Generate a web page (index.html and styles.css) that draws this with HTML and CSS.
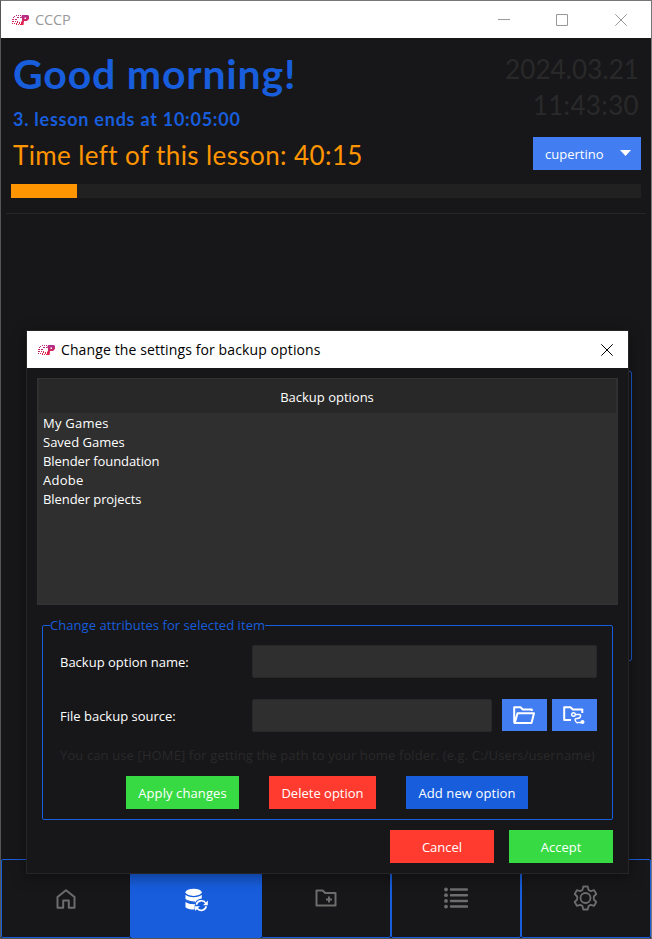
FILE: index.html
```html
<!DOCTYPE html>
<html lang="en">
<head>
<meta charset="utf-8">
<title>CCCP</title>
<link rel="stylesheet" href="styles.css">
</head>
<body>
<svg class="defs" aria-hidden="true">
  <defs>
    <linearGradient id="brand" x1="0" y1="0" x2="0" y2="1">
      <stop offset="0" stop-color="#b03090"/>
      <stop offset="1" stop-color="#ee1c3c"/>
    </linearGradient>
    <symbol id="logo" viewBox="0 0 17 10">
      <g fill="none" stroke="#b8287c" stroke-width="1" stroke-dasharray="1 1" shape-rendering="crispEdges">
        <path d="M4 .5h5M2 1.500h2M1 2.500h2M1 4v3"/>
        <path stroke-dasharray="2 1" d="M5 2.500h4M3 4.500h3"/>
        <path stroke="#d8284e" d="M.5 3.500v5M3 6.500h3M2 8.500h3M4 9.500h5M7 8.500h2M5 7.500h3"/>
      </g>
      <path fill="url(#brand)" fill-rule="evenodd" d="M10 0h6l1 1v3l-2 2h-3l-.5 4H9V7l1-1V3H9zM12.500 2.500V4H14V2.500z"/>
    </symbol>
  </defs>
</svg>
<div class="window">
  <header class="titlebar">
    <svg class="logo"><use href="#logo"/></svg>
    <span class="app-name">CCCP</span>
    <div class="controls">
      <svg viewBox="0 0 12 12"><path d="M0 5.500h12"/></svg>
      <svg viewBox="0 0 12 12"><path d="M.5 .5h11v11H.5z"/></svg>
      <svg viewBox="0 0 12 12"><path d="M.3 .3l11.400 11.400M11.700 .3L.3 11.700"/></svg>
    </div>
  </header>
  <section class="status">
    <div class="lesson">
      <h1>Good morning!</h1>
      <p class="ends">3. lesson ends at 10:05:00</p>
      <p class="left">Time left of this lesson: 40:15</p>
    </div>
    <div class="side">
      <p class="date">2024.03.21</p>
      <p class="time">11:43:30</p>
      <button class="theme"><span>cupertino</span><i class="arrow"></i></button>
    </div>
  </section>
  <div class="progress"><div class="bar"></div></div>
  <main class="page"><div class="panel"></div></main>
  <nav class="tabs">
    <div class="tab"><svg viewBox="0 0 20 20"><path d="M1.500 8L10 1.200 18.500 8v10.800h-5.700v-7.300H7.200v7.300H1.500z"/></svg></div>
    <div class="tab active"><svg class="db" viewBox="0 0 24 24">
      <g class="solid"><ellipse cx="9" cy="4" rx="8.500" ry="3.700"/><path d="M.5 6.500Q3 9 9 9t8.500-2.500v4Q12.500 11 11 14.300 3 14.500 .5 12zM.5 14Q4 16.500 10.300 16.300L10 22Q3 22 .5 19.500zM.5 12Q4 14.800 10.500 14.500v-1Q4 13.500 .5 11z"/></g>
      <path class="lines" d="M.5 12.800Q4 15.300 10.500 15.200"/>
      <path class="sync" d="M11.800 17a5.500 5.500 0 0 1 9.700-2M22.200 18.500a5.500 5.500 0 0 1-9.700 2.200"/>
      <path class="solid" d="M23.800 12.500v5h-5zM10.500 23.500v-5h5z"/></svg></div>
    <div class="tab"><svg class="folder" viewBox="0 0 22 18"><path d="M1.500 1.500h6.200l2.500 2.500h10.300v12.500h-19zM14 7.500v6M11 10.500h6"/></svg></div>
    <div class="tab"><svg class="list" viewBox="0 0 24 22"><path d="M7 2.500h16M7 8.200h16M7 13.900h16M7 19.600h16"/><g class="dots"><circle cx="2" cy="2.500" r="1.900"/><circle cx="2" cy="8.200" r="1.900"/><circle cx="2" cy="13.900" r="1.900"/><circle cx="2" cy="19.600" r="1.900"/></g></svg></div>
    <div class="tab"><svg class="gear" viewBox="0 0 24 26"><path d="M9.800 1.500h4.400l.8 3.400 2.300 1.300 3.300-1 2.200 3.800-2.500 2.500v3l2.500 2.500-2.200 3.800-3.300-1-2.300 1.300-.8 3.400H9.800L9 21.100l-2.300-1.300-3.300 1L1.200 17l2.500-2.500v-3L1.200 9l2.200-3.800 3.300 1L9 4.900z"/><circle cx="12" cy="13" r="5"/></svg></div>
  </nav>

  <div class="dialog" role="dialog">
    <header class="dialog-title">
      <svg class="logo"><use href="#logo"/></svg>
      <span>Change the settings for backup options</span>
      <svg class="close" viewBox="0 0 12 12"><path d="M.3 .3l11.400 11.400M11.700 .3L.3 11.700"/></svg>
    </header>
    <div class="dialog-body">
      <div class="options">
        <div class="options-head">Backup options</div>
        <ul>
          <li class="wide">My Games</li>
          <li>Saved Games</li>
          <li class="tight">Blender foundation</li>
          <li class="wide">Adobe</li>
          <li class="tight">Blender projects</li>
        </ul>
      </div>
      <fieldset>
        <legend>Change attributes for selected item</legend>
        <div class="row">
          <label>Backup option name:</label>
          <input type="text">
        </div>
        <div class="row">
          <label>File backup source:</label>
          <input type="text">
          <button class="pick"><svg viewBox="0 0 22 18"><path d="M4 17.200H1.800L1.200 16V1.200h6.300l2.300 2.300h9V5M4.500 7.200H21L18.500 17H1.800z"/></svg></button>
          <button class="pick"><svg viewBox="0 0 22 18"><path d="M8 14H1.200V1.200h6.300l2.300 2.300h9.500V7"/><g class="thin"><circle cx="10.500" cy="8.500" r="1.800"/><path d="M12.300 8.500H16q2 0 1.500 2t-3.500 2-1.500 2.500 3 1.500h3"/></g><circle class="fill" cx="19.500" cy="16" r="2"/></svg></button>
        </div>
        <p class="hint">You can use [HOME] for getting the path to your home folder. (e.g. C:/Users/username)</p>
        <div class="actions">
          <button class="btn green apply">Apply changes</button>
          <button class="btn red delete">Delete option</button>
          <button class="btn blue add">Add new option</button>
        </div>
      </fieldset>
      <div class="footer">
        <button class="btn red">Cancel</button>
        <button class="btn green">Accept</button>
      </div>
    </div>
  </div>
</div>
</body>
</html>
```
FILE: styles.css
```css
* { box-sizing: border-box; }
body { margin: 0; background: #171719; color: #fff; font: 13px/19px "Open Sans", "Noto Sans", sans-serif; }
h1, p, ul { margin: 0; padding: 0; font-weight: normal; }
button { border: 0; padding: 0; color: inherit; font: inherit; white-space: nowrap; }
svg { display: block; fill: none; flex: none; }
.defs { position: absolute; width: 0; height: 0; }
.window { position: relative; width: 652px; height: 939px; display: flex; flex-direction: column; border: 1px solid #555; border-top-color: #777; border-right-color: #777; overflow: hidden; }
.logo { width: 17px; height: 10px; }
.titlebar { height: 37px; flex: none; display: flex; align-items: center; background: #fff; color: #999; padding: 0 24px 0 11px; }
.app-name { margin-left: 6px; font-size: 14.5px; letter-spacing: -.1px; }
.controls { margin-left: auto; display: flex; gap: 47px; }
.controls svg { width: 12px; height: 12px; stroke: #999; }
.controls svg:first-child { margin-right: -1px; }

.status { height: 146px; flex: none; display: flex; justify-content: space-between; padding: 0 10px 0 12px; font-family: Lato, sans-serif; white-space: nowrap; }
h1 { margin-top: 12px; font-size: 41px; line-height: 48px; font-weight: bold; letter-spacing: .8px; color: #175ddc; }
.ends { margin-top: 9px; font-size: 18px; line-height: 24px; font-weight: bold; letter-spacing: .75px; color: #175ddc; }
.left { margin-top: 8px; font-size: 26px; line-height: 32px; letter-spacing: .4px; color: #ff9500; }
.side { display: flex; flex-direction: column; align-items: flex-end; color: #29292a; font-size: 26px; line-height: 36px; }
.date { margin: 13px 2px 0 0; letter-spacing: .1px; }
.time { margin-right: 2px; letter-spacing: .35px; }
.theme { margin-top: 14px; width: 108px; height: 33px; display: flex; justify-content: space-between; align-items: center; padding: 0 10px 0 12px; background: #427df2; color: #fff; font: 13px "Open Sans", sans-serif; }
.arrow { width: 11px; height: 6px; margin-top: -1px; background: #fff; clip-path: polygon(0 0, 100% 0, 50% 100%); }
.progress { height: 14px; flex: none; margin: 0 10px; background: #212121; }
.bar { width: 66px; height: 14px; background: #ff9500; }
.page { flex: 1; margin: 15px 5px 0; border-top: 1px solid #272729; padding: 157px 14px 0 20px; }
.panel { height: 290px; border: 1px solid #1c58c8; border-radius: 2px; }
.tabs { height: 79px; flex: none; display: flex; }
.tab { flex: 1; display: flex; align-items: center; justify-content: center; border: 1px solid #175ddc; border-radius: 2px; stroke: #6d6d6d; }
.tab svg { width: 20px; height: 20px; margin-right: 1px; stroke-width: 2; stroke-linejoin: round; }
.tab.active { background: #175ddc; border-radius: 0; }
.tab .db { width: 23px; height: 24px; stroke: none; margin: 2px 0 0 1px; }
.solid { fill: #fff; }
.lines { stroke: #175ddc; stroke-width: 1.2; }
.sync { stroke: #fff; stroke-width: 1.7; }
.tab .folder { width: 22px; height: 18px; margin-bottom: 1px; }
.tab .list { width: 24px; height: 22px; margin: 0 0 1px; stroke-width: 2.5; stroke-linecap: round; }
.dots { fill: #6d6d6d; stroke: none; }
.tab .gear { width: 25px; height: 26px; margin-bottom: 1px; stroke-width: 1.8; }

.dialog { position: absolute; left: 25px; top: 329px; width: 603px; height: 544px; display: flex; flex-direction: column; background: #171719; border: 1px solid #252527; box-shadow: 0 3px 14px rgba(0, 0, 0, .4); }
.dialog-title { height: 37px; flex: none; display: flex; align-items: center; background: #fff; color: #000; padding: 0 15px 0 11px; }
.dialog-title span { margin-left: 6px; font-size: 14px; letter-spacing: .11px; white-space: nowrap; }
.close { width: 12px; height: 12px; margin-left: auto; stroke: #000; }
.dialog-body { flex: 1; display: flex; flex-direction: column; padding: 10px; }
.options { height: 227px; flex: none; background: #2f2f2f; border: 1px solid #323232; }
.options-head { height: 34px; margin: 0 1px; padding: 9px 1px 0 0; text-align: center; background: #282828; }
.options ul { list-style: none; padding: 1px 0 0 5px; }
.wide { letter-spacing: .25px; }
.tight { letter-spacing: -.08px; }
fieldset { margin: 11px 5px 0; height: 204px; flex: none; border: 1px solid #175ddc; border-radius: 2px; padding: 10px 15px 0 17px; min-width: 0; }
legend { margin-left: -10px; padding: 0; color: #175ddc; height: 19px; letter-spacing: .05px; white-space: nowrap; }
.row { display: flex; align-items: center; height: 33px; margin-bottom: 21px; }
.row label { width: 192px; flex: none; padding-top: 2px; white-space: nowrap; }
.row input { flex: 1; min-width: 0; height: 33px; background: #2f2f2f; border: 1px solid #282828; border-radius: 2px; padding: 0; }
.pick { width: 45px; height: 32px; display: flex; align-items: center; justify-content: center; align-self: flex-start; background: #427df2; margin-left: 5px; }
input + .pick { margin-left: 10px; }
.pick svg { width: 22px; height: 18px; margin-right: 1px; stroke: #fff; stroke-width: 2; stroke-linejoin: round; }
.pick .thin { stroke-width: 1.4; }
.pick .fill { fill: #fff; stroke: none; }
.hint { margin-top: -7px; color: #29292a; letter-spacing: .12px; white-space: nowrap; }
.actions { display: flex; gap: 30px; padding-left: 66px; margin-top: 11px; }
.btn { height: 33px; width: 104px; padding-top: 2px; }
.apply { width: 113px; letter-spacing: .1px; }
.delete { width: 107px; }
.add { width: 122px; letter-spacing: .1px; }
.green { background: #37da43; }
.red { background: #ff3b30; }
.blue { background: #175ddc; }
.footer { margin-top: 10px; padding-right: 5px; display: flex; justify-content: flex-end; gap: 15px; }
```
